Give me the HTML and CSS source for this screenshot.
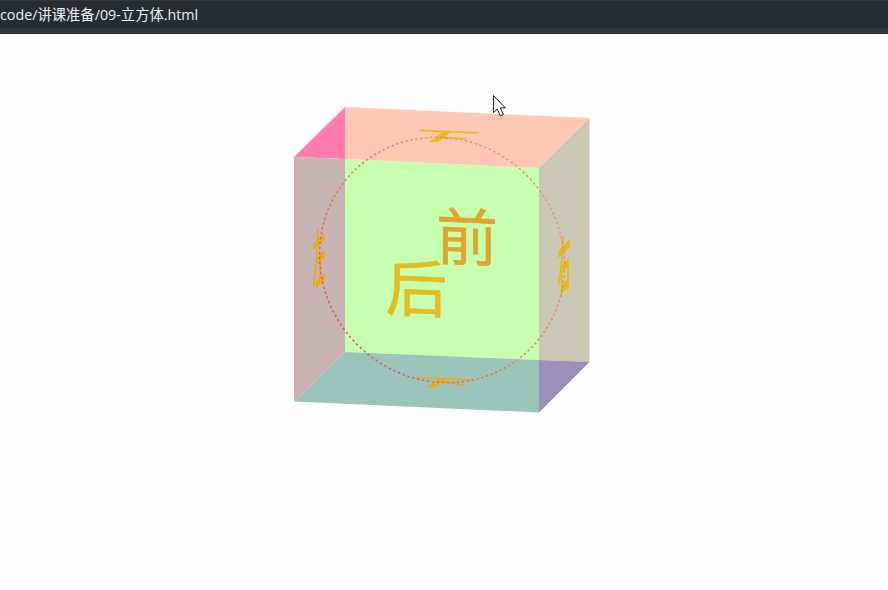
FILE: index.html
```html
<!DOCTYPE html>
<html lang="zh-CN">
<head>
<meta charset="utf-8">
<title>09-立方体</title>
<link rel="stylesheet" href="styles.css">
</head>
<body>
<header class="tab-bar">
  <div class="tab-path">code/讲课准备/09-立方体.html</div>
  <div class="tab-strip"></div>
</header>
<main class="stage">
  <svg class="scene" viewBox="0 34 888 556" xmlns="http://www.w3.org/2000/svg">
    <defs>
      <linearGradient id="ring" x1="0.9" y1="0.1" x2="0.1" y2="0.9">
        <stop offset="0" stop-color="#f5935a"/>
        <stop offset="0.5" stop-color="#f0805a"/>
        <stop offset="1" stop-color="#d8505f"/>
      </linearGradient>
    </defs>
    <polygon class="f-green" points="345,159 539,168 539,360 345,352"/>
    <polygon class="f-peach" points="345,107 589.5,118 539,168 345,159"/>
    <polygon class="f-pink" points="294,157 345,107 345,159"/>
    <polygon class="f-left" points="294,157 345,159 345,352 294,401.500"/>
    <polygon class="f-right" points="539,168 589.5,118 589.5,362 539,360"/>
    <polygon class="f-bottom" points="294,401.500 345,352 539,360 539,412.500"/>
    <polygon class="f-purple" points="539,360 589.5,362 539,412.500"/>

    <text class="glyph-side side-gold" transform="matrix(1 .045 .27 -.2 418 130)">上</text>
    <text class="glyph-side side-amber" transform="matrix(1 .045 -.26 .17 402 385)">下</text>
    <text class="glyph-side side-amber" transform="matrix(.2 -.2 0 1 313 288)">左</text>
    <text class="glyph-side side-gold" transform="matrix(.2 -.2 0 1 558 295)">右</text>

    <circle class="ring" cx="0" cy="0" r="122.5" transform="matrix(1 .045 0 1 442 260)"/>

    <text class="glyph-main front" transform="matrix(1 .045 0 1 436 259)">前</text>
    <text class="glyph-main back" transform="matrix(1 .045 0 1 385.500 310)">后</text>

    <path class="cursor" d="M493.5 95.500v17l3.800-3.500 3 6.800 3-1.300-3-6.600h5z"/>
  </svg>
</main>
</body>
</html>
```
FILE: styles.css
```css
html, body {
  margin: 0;
  padding: 0;
  height: 100%;
  background: #fefefe;
  overflow: hidden;
}
.tab-bar {
  display: flex;
  flex-direction: column;
  height: 34px;
  background: #282c30;
  border-top: 1px solid #33373b;
  box-sizing: border-box;
  overflow: hidden;
}
.tab-path {
  flex: 1;
  color: #eceff1;
  font: 14.3px/27px "Open Sans", "Noto Sans CJK SC", sans-serif;
  white-space: nowrap;
}
.tab-strip {
  height: 5px;
  background: #32363a;
  border-bottom: 1px solid #26292c;
}
.stage {
  display: block;
}
.scene {
  display: block;
  width: 888px;
  height: 556px;
}
.f-green { fill: #c6ffb0; }
.f-peach { fill: #ffc8b4; }
.f-pink { fill: #ff7bb0; }
.f-left { fill: #c8b4b4; }
.f-right { fill: #c8c8b4; }
.f-bottom { fill: #9bc4bb; }
.f-purple { fill: #9b90bb; }
.glyph-main {
  font-family: "Noto Sans CJK SC", sans-serif;
  font-size: 62px;
  font-weight: 400;
  stroke-width: 0.6;
}
.glyph-side {
  font-family: "Noto Sans CJK SC", sans-serif;
  font-size: 64px;
  font-weight: 700;
}
.front { fill: #e0a52a; stroke: #e0a52a; }
.back { fill: #e6bc1c; stroke: #e6bc1c; }
.side-gold { fill: #e6bc14; }
.side-amber { fill: #e8aa20; }
.ring {
  fill: none;
  stroke: url(#ring);
  stroke-width: 1.5;
  stroke-dasharray: 2.500 2.500;
}
.cursor {
  fill: #fff;
  stroke: #1a1a1a;
  stroke-width: 1;
}
```
